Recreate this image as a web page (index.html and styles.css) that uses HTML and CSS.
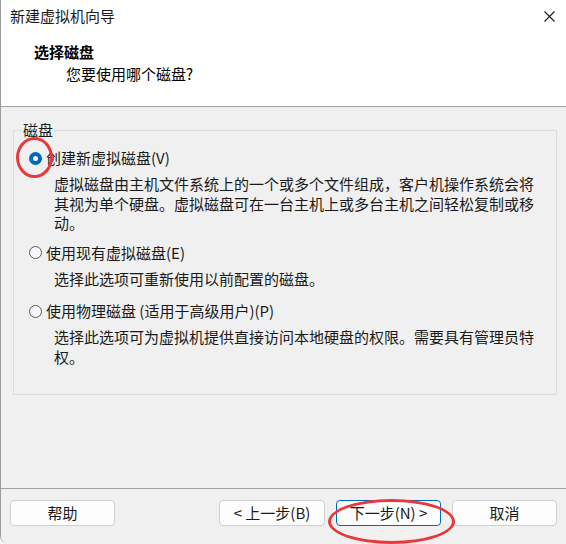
FILE: index.html
```html
<!DOCTYPE html>
<html>
<head>
  <meta charset="utf-8">
  <link rel="stylesheet" href="styles.css">
</head>
<body>
  <div class="wizard">
    <!-- Title bar -->
    <div class="titlebar">
      <span class="title">新建虚拟机向导</span>
      <svg class="close" width="11" height="11" viewBox="0 0 11 11">
        <path d="M0.5 0.5 L10.5 10.5 M10.5 0.5 L0.5 10.5" stroke="#1a1a1a" stroke-width="1.1" fill="none"/>
      </svg>
    </div>

    <!-- Header -->
    <div class="header">
      <div class="header-title">选择磁盘</div>
      <div class="header-sub">您要使用哪个磁盘?</div>
    </div>

    <!-- Content -->
    <div class="content">
      <fieldset class="group">
        <legend>磁盘</legend>
        <div class="option">
          <div class="option-row"><span class="radio checked"></span>创建新虚拟磁盘(V)</div>
          <div class="option-desc">虚拟磁盘由主机文件系统上的一个或多个文件组成，客户机操作系统会将其视为单个硬盘。虚拟磁盘可在一台主机上或多台主机之间轻松复制或移动。</div>
        </div>
        <div class="option">
          <div class="option-row"><span class="radio"></span>使用现有虚拟磁盘(E)</div>
          <div class="option-desc">选择此选项可重新使用以前配置的磁盘。</div>
        </div>
        <div class="option">
          <div class="option-row"><span class="radio"></span>使用物理磁盘 (适用于高级用户)(P)</div>
          <div class="option-desc">选择此选项可为虚拟机提供直接访问本地硬盘的权限。需要具有管理员特权。</div>
        </div>
      </fieldset>
    </div>

    <!-- Footer buttons -->
    <div class="footer">
      <button class="btn">帮助</button>
      <button class="btn btn-back">&lt; 上一步(B)</button>
      <button class="btn btn-default">下一步(N) &gt;</button>
      <button class="btn">取消</button>
    </div>

    <!-- red annotation marks -->
    <div class="mark mark-radio"></div>
    <div class="mark mark-next"></div>
  </div>
</body>
</html>
```

FILE: styles.css
```css
  body {
    margin: 0;
    font-family: "Noto Sans CJK SC", "Noto Sans", sans-serif;
    font-size: 15px;
    color: #1a1a1a;
    background: #fff;
  }

  .wizard {
    position: relative;
    width: 565px;
    height: 544px;
    display: flex;
    flex-direction: column;
    border-left: 1px solid #9c9c9c;
    border-bottom-left-radius: 8px;
    overflow: hidden;
  }

  .titlebar {
    height: 32px;
    display: flex;
    align-items: center;
    justify-content: space-between;
    padding: 0 11px 0 9px;
    background: #fff;
    line-height: 20px;
  }

  .header {
    height: 75px;
    background: #fff;
    border-bottom: 1px solid #a0a0a0;
    padding: 10px 0 0 33px;
    box-sizing: border-box;
    line-height: 20px;
  }

  .header-title {
    font-weight: bold;
    color: #000;
  }

  .header-sub {
    margin: 2px 0 0 32px;
    color: #000;
  }

  .content {
    flex: 1;
    background: #f0f0f0;
    padding-top: 13px;
  }

  .group {
    margin: 0 9px 0 12px;
    padding: 8px 0 28px 8px;
    border: 1px solid #dcdcdc;
    line-height: 20px;
  }

  .group legend {
    padding: 0 1px;
    line-height: 20px;
  }

  .option {
    padding-left: 7px;
    margin-top: 10px;
  }

  .option:first-of-type {
    margin-top: 0;
  }

  .option:last-child {
    margin-top: 13px;
  }

  .option-row {
    display: flex;
    align-items: center;
    height: 20px;
  }

  .radio {
    width: 11px;
    height: 11px;
    border: 1px solid #5a5a5a;
    border-radius: 50%;
    background: #f8f8f8;
    margin-right: 4px;
    position: relative;
  }

  .radio.checked {
    width: 13px;
    height: 13px;
    border: none;
    background: #0067c0;
  }

  .radio.checked::after {
    content: "";
    position: absolute;
    left: 4px;
    top: 4px;
    width: 5px;
    height: 5px;
    border-radius: 50%;
    background: #fff;
  }

  .option-desc {
    margin: 6px 0 0 25px;
    max-width: 482px;
    line-height: 19.5px;
  }

  .footer {
    height: 44px;
    background: #f0f0f0;
    border-top: 1px solid #a0a0a0;
    display: flex;
    align-items: flex-start;
    padding: 11px 9px 0 9px;
    gap: 11px;
  }

  .btn {
    width: 105px;
    height: 26px;
    background: #fdfdfd;
    border: 1px solid #d0d0d0;
    border-radius: 4px;
    font-family: inherit;
    font-size: 15px;
    color: #1a1a1a;
    padding: 0;
    line-height: 22px;
  }

  .btn-back {
    margin-left: auto;
    width: 106px;
  }

  .btn-default {
    border-color: #0067c0;
  }

  .mark {
    position: absolute;
    border: 3px solid #e8383b;
    border-radius: 50%;
    box-sizing: border-box;
  }

  .mark-radio {
    left: 15px;
    top: 137px;
    width: 37px;
    height: 41px;
  }

  .mark-next {
    left: 327px;
    top: 499px;
    width: 127px;
    height: 45px;
  }
```
